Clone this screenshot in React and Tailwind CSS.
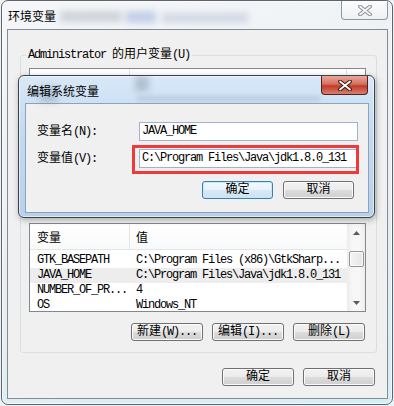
import React from 'react';

// latin text in SimSun-like narrow mono
const M = ({ children }) => <span className="tracking-[-1.2px]">{children}</span>;

function Btn({ children, focused, w = 'w-[72px]' }) {
  return (
    <div
      className={`${w} h-[18px] shrink-0 rounded-[3px] border flex items-center justify-center leading-[14px] ${
        focused
          ? 'border-[#3c7fb1] bg-[linear-gradient(#f4f9fd,#e8f2fa_50%,#d9e9f5_50%,#cfe2f1)] shadow-[inset_0_0_0_1px_#c2e8fa]'
          : 'border-[#707070] bg-[linear-gradient(#f2f2f2,#ebebeb_50%,#dddddd_50%,#cfcfcf)] shadow-[inset_0_0_0_1px_#fbfbfb]'
      }`}
    >
      {children}
    </div>
  );
}

function CloseX({ red }) {
  const d = 'M2 1.5 L12 9.5 M12 1.5 L2 9.5';
  return (
    <svg width="14" height="11" viewBox="0 0 14 11">
      <path d={d} stroke={red ? '#3a1a16' : '#8a8f96'} strokeWidth="3.8" strokeLinecap="round" />
      <path d={d} stroke={red ? '#ffffff' : '#f6f6f6'} strokeWidth="1.8" strokeLinecap="round" />
    </svg>
  );
}

function Arrow({ down }) {
  return (
    <svg width="7" height="4" viewBox="0 0 7 4">
      <path d={down ? 'M0 0 H7 L3.5 4 Z' : 'M0 4 H7 L3.5 0 Z'} fill="#5a5a5a" />
    </svg>
  );
}

const rows = [
  ['GTK_BASEPATH', 'C:\\Program Files (x86)\\GtkSharp...'],
  ['JAVA_HOME', 'C:\\Program Files\\Java\\jdk1.8.0_131'],
  ['NUMBER_OF_PR...', '4'],
  ['OS', 'Windows_NT'],
];

export default function App() {
  return (
    <div className="relative w-[394px] h-[406px] overflow-hidden bg-[#eef2f5] text-[12px] text-black font-['Liberation_Mono','Noto_Sans_CJK_SC',monospace]">
      {/* outer window */}
      <div className="ml-[1px] w-[392px] h-[405px] rounded-[7px] border border-[#5d636b] bg-[linear-gradient(165deg,#f4f6f8_0%,#eaeef2_55%,#d3eef5_100%)] shadow-[inset_0_0_0_1px_rgba(255,255,255,0.7)] flex flex-col overflow-hidden">
        <div className="relative h-[28px] shrink-0 flex justify-between">
          <div className="absolute left-[58px] top-[10px] w-[62px] h-[11px] bg-[#7f8a9c] opacity-30 blur-[3px]" />
          <div className="absolute left-[124px] top-[10px] w-[30px] h-[12px] bg-[#5b7fc4] opacity-30 blur-[3px]" />
          <div className="absolute left-[160px] top-[12px] w-[86px] h-[10px] bg-[#7d8fb0] opacity-25 blur-[3px]" />
          <div className="relative pl-[6px] pt-[8px] leading-[14px] font-['Noto_Sans_CJK_SC',sans-serif]">环境变量</div>
          <div className="mr-[4px] w-[47px] h-[19px] rounded-b-[4px] border border-t-0 border-[#8c97a4] bg-[linear-gradient(#fdfdfd,#eef1f4)] flex items-center justify-center">
            <CloseX />
          </div>
        </div>

        {/* client */}
        <div className="ml-[5px] mr-[4px] mb-[5px] flex-1 border border-[#838b96] bg-[#f0f0f0] flex flex-col">
          <fieldset className="ml-[12px] mt-[19px] w-[357px] rounded-[3px] border border-[#d5dfe5]">
            <legend className="ml-[5px] px-[2px] leading-[12px]">
              <M>Administrator </M>的用户变量<M>(U)</M>
            </legend>

            <div className="ml-[8px] mt-[7px] w-[337px] h-[150px] border border-[#828790] bg-white">
              <div className="h-[25px] flex border-b border-[#e5e5e5]">
                <div className="w-[100px] border-r border-[#e5e5e5]" />
                <div className="w-[217px] border-r border-[#e5e5e5]" />
              </div>
            </div>

            <div className="ml-[8px] mt-[5px] w-[337px] h-[89px] border border-[#828790] bg-white flex overflow-hidden">
              <div className="w-[317px] flex flex-col">
                <div className="h-[26px] shrink-0 flex border-b border-[#e5e5e5] bg-[linear-gradient(#ffffff,#f8f9fa)]">
                  <div className="w-[100px] border-r border-[#e5e5e5] pl-[7px] pt-[8px] leading-[14px]">变量</div>
                  <div className="flex-1 pl-[6px] pt-[8px] leading-[14px]">值</div>
                </div>
                <div className="pt-[3px]">
                  {rows.map(([k, v], i) => (
                    <div key={k} className={`h-[15px] flex leading-[15px] whitespace-nowrap ${i === 1 ? 'bg-[#ededed]' : ''}`}>
                      <div className="w-[100px] pl-[7px] overflow-hidden"><M>{k}</M></div>
                      <div className="flex-1 pl-[6px] overflow-hidden"><M>{v}</M></div>
                    </div>
                  ))}
                </div>
              </div>
              <div className="flex-1 flex flex-col items-center bg-[linear-gradient(90deg,#ececec,#f7f7f7_30%,#f7f7f7_70%,#ececec)]">
                <div className="h-[17px] flex items-center justify-center"><Arrow /></div>
                <div className="mt-[10px] w-[15px] h-[16px] rounded-[2px] border border-[#959595] bg-[linear-gradient(90deg,#f4f4f4,#e6e6e6)] shadow-[inset_0_0_0_1px_#fcfcfc]" />
                <div className="mt-auto h-[17px] flex items-center justify-center"><Arrow down /></div>
              </div>
            </div>

            <div className="mt-[11px] mb-[11px] pr-[11px] flex justify-end gap-[9px]">
              <Btn>新建<M>(W)...</M></Btn>
              <Btn>编辑<M>(I)...</M></Btn>
              <Btn>删除<M>(L)</M></Btn>
            </div>
          </fieldset>

          <div className="mt-[15px] pr-[12px] flex justify-end gap-[9px]">
            <Btn>确定</Btn>
            <Btn>取消</Btn>
          </div>
        </div>
      </div>

      {/* edit dialog on top */}
      <div className="absolute left-[18px] top-[75px] w-[357px] h-[143px] rounded-[6px] border border-[#3b4148] bg-[linear-gradient(#d8e8f8,#c3daf0_40%,#b8d1eb)] shadow-[1px_2px_6px_rgba(0,0,0,0.3),inset_0_0_0_1px_rgba(255,255,255,0.55)] flex flex-col overflow-hidden">
        <div className="relative h-[27px] shrink-0 flex justify-between">
          <div className="absolute left-[21px] top-[10px] w-[17px] h-[16px] bg-[#5f6d7c] opacity-30 blur-[3px]" />
          <div className="absolute left-[116px] top-[0px] w-[14px] h-[15px] bg-[#5f6d7c] opacity-30 blur-[3px]" />
          <div className="absolute left-[118px] top-[20px] w-[183px] h-[5px] bg-[#8a98a8] opacity-30 blur-[2px]" />
          <div className="relative pl-[8px] pt-[8px] leading-[14px] font-['Noto_Sans_CJK_SC',sans-serif]">编辑系统变量</div>
          <div className="mr-[6px] w-[47px] h-[19px] rounded-b-[4px] border border-t-0 border-[#4a2420] bg-[linear-gradient(#e8a99c,#d6705f_45%,#c33a26_55%,#d8806c)] flex items-center justify-center">
            <CloseX red />
          </div>
        </div>
        <div className="ml-[6px] mr-[5px] h-[110px] border border-[#8da2bb] bg-[#f0f0f0] pt-[18px]">
          <div className="pl-[11px] h-[19px] flex items-center">
            <div className="w-[102px] leading-[14px]">变量名<M>(N):</M></div>
            <div className="w-[219px] h-[19px] border border-[#9fb4cc] bg-white pl-[2px] leading-[17px]"><M>JAVA_HOME</M></div>
          </div>
          <div className="mt-[8px] pl-[11px] h-[19px] flex items-center">
            <div className="w-[102px] leading-[14px]">变量值<M>(V):</M></div>
            <div className="w-[219px] h-[19px] border border-[#9fb4cc] bg-white pl-[2px] leading-[17px] whitespace-nowrap overflow-hidden"><M>C:\Program Files\Java\jdk1.8.0_131</M></div>
          </div>
          <div className="mt-[13px] pr-[14px] flex justify-end gap-[10px]">
            <Btn focused w="w-[71px]">确定</Btn>
            <Btn w="w-[71px]">取消</Btn>
          </div>
        </div>
      </div>

      {/* red annotation box */}
      <div className="absolute left-[132px] top-[145px] w-[227px] h-[29px] border-[3px] border-[#f2393a]" />
    </div>
  );
}
